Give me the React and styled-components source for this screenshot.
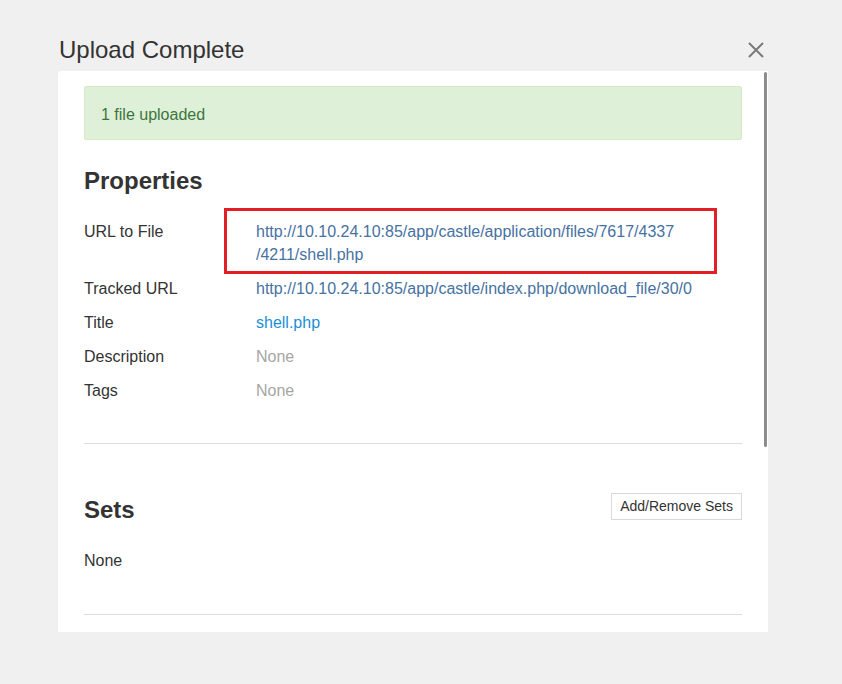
import React from "react";
import styled, { createGlobalStyle } from "styled-components";

const GlobalStyle = createGlobalStyle`
  html, body {
    margin: 0;
    padding: 0;
    background: #f0f0f0;
    font-family: "Liberation Sans", Arial, sans-serif;
    color: #333;
  }
`;

const Page = styled.div`
  width: 842px;
  height: 684px;
  overflow: hidden;
`;

const Dialog = styled.div`
  width: 710px;
  margin-left: 58px;
`;

const Header = styled.div`
  display: flex;
  align-items: center;
  justify-content: space-between;
  padding: 37px 4px 8px 1px;
`;

const Title = styled.h2`
  margin: 0;
  font-size: 24px;
  line-height: 26px;
  font-weight: normal;
  color: #333;
`;

const CloseButton = styled.button`
  border: 0;
  background: none;
  padding: 0;
  width: 16px;
  height: 16px;
  display: flex;
  cursor: pointer;
`;

const Panel = styled.div`
  position: relative;
  background: #fff;
  height: 561px;
  overflow: hidden;
  border-top-left-radius: 4px;
  padding: 15px 26px 0;
  box-sizing: border-box;
`;

const Scrollbar = styled.div`
  position: absolute;
  top: 1px;
  right: 1px;
  width: 3px;
  height: 375px;
  background: #8c8c8c;
  border-radius: 2px;
`;

const Alert = styled.div`
  background: #dff0d8;
  border: 1px solid #d6e9c6;
  border-radius: 2px;
  color: #3c763d;
  font-size: 16px;
  line-height: 55px;
  height: 52px;
  padding: 0 16px;
`;

const SectionTitle = styled.h3`
  margin: ${(p) => p.$top || 0}px 0 0;
  font-size: 24px;
  line-height: 26px;
  font-weight: bold;
  color: #333;
`;

const PropList = styled.dl`
  margin: 26px 0 0;
  font-size: 16px;
  line-height: 23px;
`;

const PropRow = styled.div`
  position: relative;
  display: grid;
  grid-template-columns: 172px 1fr;
  margin-bottom: 11px;
`;

const Label = styled.dt`
  margin: 0;
  color: #333;
`;

const Value = styled.dd`
  margin: 0;
  color: ${(p) => (p.$muted ? "#a6a6a6" : "#333")};
`;

const Link = styled.a`
  color: ${(p) => (p.$bright ? "#1b8fd6" : "#4672a2")};
  text-decoration: none;
`;

const Highlight = styled.div`
  position: absolute;
  left: 140px;
  top: -12px;
  width: 487px;
  height: 60px;
  border: 3px solid #e31e24;
  pointer-events: none;
`;

const Divider = styled.hr`
  border: 0;
  border-top: 1px solid #ddd;
  margin: ${(p) => p.$top}px 0 0;
`;

const SetsHeader = styled.div`
  display: flex;
  align-items: center;
  justify-content: space-between;
  margin-top: 53px;
`;

const SmallButton = styled.button`
  font-family: "Liberation Sans", Arial, sans-serif;
  font-size: 14px;
  color: #333;
  background: #fff;
  border: 1px solid #d9d9d9;
  height: 27px;
  padding: 0 8px;
  margin-top: -8px;
`;

const PlainText = styled.p`
  margin: 26px 0 0;
  font-size: 16px;
  line-height: 23px;
  color: #333;
`;

const CloseIcon = () => (
  <svg width="16" height="16" viewBox="0 0 16 16">
    <path d="M1 1 L15 15 M15 1 L1 15" stroke="#7a7a7a" strokeWidth="2" fill="none" />
  </svg>
);

export default function App() {
  return (
    <Page>
      <GlobalStyle />
      <Dialog>
        <Header>
          <Title>Upload Complete</Title>
          <CloseButton aria-label="Close">
            <CloseIcon />
          </CloseButton>
        </Header>
        <Panel>
          <Scrollbar />
          <Alert>1 file uploaded</Alert>
          <SectionTitle $top={28}>Properties</SectionTitle>
          <PropList>
            <PropRow>
              <Label>URL to File</Label>
              <Value>
                <Link href="#">
                  http://10.10.24.10:85/app/castle/application/files/7617/4337
                  <br />
                  /4211/shell.php
                </Link>
              </Value>
              <Highlight />
            </PropRow>
            <PropRow>
              <Label>Tracked URL</Label>
              <Value>
                <Link href="#">http://10.10.24.10:85/app/castle/index.php/download_file/30/0</Link>
              </Value>
            </PropRow>
            <PropRow>
              <Label>Title</Label>
              <Value>
                <Link href="#" $bright>shell.php</Link>
              </Value>
            </PropRow>
            <PropRow>
              <Label>Description</Label>
              <Value $muted>None</Value>
            </PropRow>
            <PropRow>
              <Label>Tags</Label>
              <Value $muted>None</Value>
            </PropRow>
          </PropList>
          <Divider $top={41} />
          <SetsHeader>
            <SectionTitle>Sets</SectionTitle>
            <SmallButton>Add/Remove Sets</SmallButton>
          </SetsHeader>
          <PlainText>None</PlainText>
          <Divider $top={42} />
        </Panel>
      </Dialog>
    </Page>
  );
}
